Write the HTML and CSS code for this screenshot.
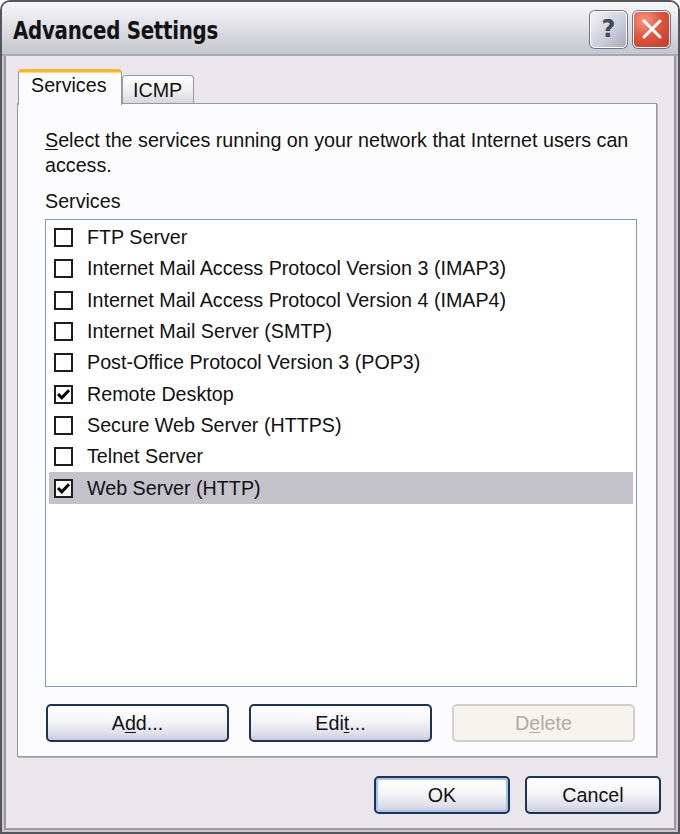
FILE: index.html
```html
<!DOCTYPE html>
<html>
<head>
<meta charset="utf-8">
<link rel="stylesheet" href="styles.css">
</head>
<body>
<div class="window">
  <div class="titlebar">
    <div class="title">Advanced Settings</div>
    <div class="title-btns">
      <div class="tbtn help">?</div>
      <div class="tbtn close">
        <svg width="26" height="26" viewBox="0 0 26 26"><path d="M5 5 L21 21 M21 5 L5 21" stroke="#fff" stroke-width="3" stroke-linecap="round"/></svg>
      </div>
    </div>
  </div>
  <div class="client">
    <div class="tabs">
      <div class="tab active">Services</div>
      <div class="tab">ICMP</div>
    </div>
    <div class="panel">
      <p class="desc">Select the services running on your network that Internet users can access.</p>
      <div class="label">Services</div>
      <div class="list">
        <div class="row"><span class="cb"></span><span>FTP Server</span></div>
        <div class="row"><span class="cb"></span><span>Internet Mail Access Protocol Version 3 (IMAP3)</span></div>
        <div class="row"><span class="cb"></span><span>Internet Mail Access Protocol Version 4 (IMAP4)</span></div>
        <div class="row"><span class="cb"></span><span>Internet Mail Server (SMTP)</span></div>
        <div class="row"><span class="cb"></span><span>Post-Office Protocol Version 3 (POP3)</span></div>
        <div class="row"><span class="cb"><svg viewBox="0 0 15 15" width="15" height="15"><path d="M2 7 L5.8 10.8 L13 3.2" fill="none" stroke="#000" stroke-width="3"/></svg></span><span>Remote Desktop</span></div>
        <div class="row"><span class="cb"></span><span>Secure Web Server (HTTPS)</span></div>
        <div class="row"><span class="cb"></span><span>Telnet Server</span></div>
        <div class="row selected"><span class="cb"><svg viewBox="0 0 15 15" width="15" height="15"><path d="M2 7 L5.8 10.8 L13 3.2" fill="none" stroke="#000" stroke-width="3"/></svg></span><span>Web Server (HTTP)</span></div>
      </div>
      <div class="btnrow">
        <button class="btn">A<span class="ul">d</span>d...</button>
        <button class="btn">Edi<span class="ul">t</span>...</button>
        <button class="btn disabled">D<span class="ul">e</span>lete</button>
      </div>
    </div>
    <div class="footer">
      <button class="btn default">OK</button>
      <button class="btn">Cancel</button>
    </div>
  </div>
</div>
</body>
</html>
```
FILE: styles.css
```css
* { box-sizing: border-box; }
html, body { margin: 0; padding: 0; background: #ffffff; }
body { width: 680px; height: 834px; overflow: hidden; font-family: "Liberation Sans", Arial, sans-serif; font-size: 19.7px; color: #111; }

.ul { text-decoration: underline; text-underline-offset: 2px; }

.window {
  width: 680px; height: 834px;
  display: flex; flex-direction: column;
  border: 2px solid #55555d;
  border-radius: 10px 10px 0 0;
  background: #ebe6eb;
  box-shadow: inset 0 0 0 2px #c9c6cc, inset 0 0 0 4px #9a98a0;
  overflow: hidden;
}

.titlebar {
  height: 54px; flex: none;
  display: flex; align-items: center; justify-content: space-between;
  padding: 0 8px 0 11px;
  background: linear-gradient(#f7f7f9 0%, #e6e6eb 35%, #d2d2d9 75%, #c6c6ce 100%);
  border-bottom: 2px solid #a9a8b1;
}
.title {
  font-family: "DejaVu Sans", sans-serif;
  font-stretch: condensed;
  font-weight: bold; font-size: 25px; color: #121212;
  letter-spacing: -0.3px;
  transform: scaleX(0.88); transform-origin: left center;
  padding-top: 4px;
}
.title-btns { display: flex; gap: 6px; padding-top: 2px; }
.tbtn {
  width: 37px; height: 37px; border-radius: 5px;
  display: flex; align-items: center; justify-content: center;
  border: 1px solid #fff;
  box-shadow: 0 0 0 1px #707480;
}
.help {
  background: linear-gradient(135deg, #f3f4f8 0%, #cdd0dc 55%, #a7aabd 100%);
  font-family: "DejaVu Sans", sans-serif; font-weight: bold; font-size: 24px; color: #44485a;
}
.close {
  background: radial-gradient(circle at 30% 25%, #f39a86 0%, #dd5640 45%, #c4392a 100%);
}

.client { flex: 1; display: flex; flex-direction: column; padding: 12px 13px 0 15px; }

.tabs { display: flex; align-items: flex-end; height: 35px; padding-left: 1px; position: relative; z-index: 1; }
.tab {
  height: 28px; padding: 2px 11px 0 10px;
  display: flex; align-items: center;
  color: #111;
  background: linear-gradient(#ffffff, #ecebf0 60%, #d8d7e0);
  border: 1px solid #919b9c; border-bottom: none;
  border-radius: 4px 4px 0 0;
}
.tab.active {
  height: 36px; width: 104px; padding: 2px 0 0 12px;
  background: #fcfcfe;
  border-top: 3px solid #f5b431;
  box-shadow: inset 0 1px 0 #fcd77e;
  margin-bottom: -2px;
  align-items: flex-start;
}

.panel {
  flex: none; height: 654px;
  margin-right: 8px;
  background: #fcfcfe;
  border: 1px solid #919b9c;
  box-shadow: 1px 1px 0 #b9b7c0;
  padding: 20px 19px 0 27px;
  display: flex; flex-direction: column;
}
.desc { margin: 4px 0 0 0; line-height: 25px; }
.desc::first-letter { text-decoration: underline; text-underline-offset: 2px; }
.label { margin-top: 11px; line-height: 24px; }
.list {
  margin-top: 6px; height: 468px;
  border: 1px solid #7f9db9;
  background: #fff;
  padding: 2px 3px;
}
.row { height: 31.3px; display: flex; align-items: center; padding-left: 5px; gap: 14px; }
.row.selected { background: #c4c3cb; }
.cb {
  width: 19px; height: 19px; flex: none;
  border: 2px solid #1d1d22;
  background: #fff;
  display: flex; align-items: center; justify-content: center;
}

.btnrow { display: flex; justify-content: space-between; margin-top: 17px; padding: 0 2px 0 1px; }
.btn {
  font-family: "Liberation Sans", Arial, sans-serif; font-size: 19.7px; color: #111;
  width: 183px; height: 38px;
  border: 2px solid #1b3453; border-radius: 5px;
  background: linear-gradient(#ffffff 0%, #f4f4f8 45%, #dfe0ea 80%, #c7cbdc 100%);
  padding: 0;
}
.btn.disabled {
  border-color: #d2cfc8; color: #b0ac9f;
  background: #f6f4ee;
}
.footer { display: flex; justify-content: flex-end; gap: 15px; padding: 19px 4px 0 0; }
.footer .btn { width: 136px; }
.btn.default { box-shadow: inset 0 0 0 2px #a9c0e8; }
```
